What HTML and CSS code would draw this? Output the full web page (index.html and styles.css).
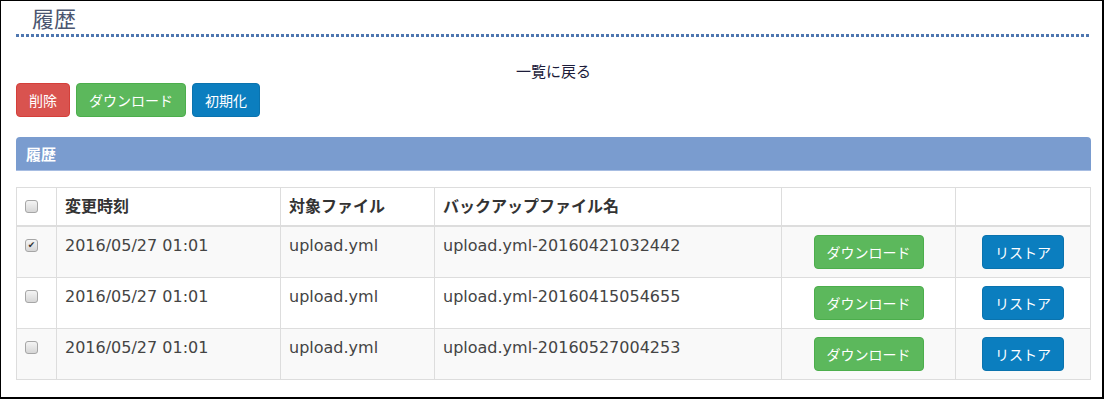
FILE: index.html
```html
<!DOCTYPE html>
<html lang="ja">
<head>
  <meta charset="UTF-8" />
  <title>履歴</title>
  <link rel="stylesheet" href="styles.css">
</head>
<body>
  <div class="pantalla">
    <h1>履歴</h1>

    <div class="volver">一覧に戻る</div>

    <div class="acciones">
      <button class="btn rojo">削除</button>
      <button class="btn verde">ダウンロード</button>
      <button class="btn azul">初期化</button>
    </div>

    <div class="panel-titulo">履歴</div>

    <table class="tabla">
      <thead>
        <tr>
          <th class="col-chk"><span class="chk"></span></th>
          <th class="col-fecha">変更時刻</th>
          <th class="col-obj">対象ファイル</th>
          <th class="col-bak">バックアップファイル名</th>
          <th class="col-btn1"></th>
          <th></th>
        </tr>
      </thead>
      <tbody>
        <tr>
          <td><span class="chk marcado">&#10004;</span></td>
          <td>2016/05/27 01:01</td>
          <td>upload.yml</td>
          <td>upload.yml-20160421032442</td>
          <td class="centro"><button class="btn verde">ダウンロード</button></td>
          <td class="centro"><button class="btn azul">リストア</button></td>
        </tr>
        <tr>
          <td><span class="chk"></span></td>
          <td>2016/05/27 01:01</td>
          <td>upload.yml</td>
          <td>upload.yml-20160415054655</td>
          <td class="centro"><button class="btn verde">ダウンロード</button></td>
          <td class="centro"><button class="btn azul">リストア</button></td>
        </tr>
        <tr>
          <td><span class="chk"></span></td>
          <td>2016/05/27 01:01</td>
          <td>upload.yml</td>
          <td>upload.yml-20160527004253</td>
          <td class="centro"><button class="btn verde">ダウンロード</button></td>
          <td class="centro"><button class="btn azul">リストア</button></td>
        </tr>
      </tbody>
    </table>
  </div>
</body>
</html>
```

FILE: styles.css
```css
* {
  box-sizing: border-box;
}
body {
  margin: 0;
  font-family: "DejaVu Sans", "Noto Sans CJK JP", sans-serif;
  color: #333;
  background: #fff;
}
.pantalla {
  width: 1104px;
  height: 399px;
  border: 1px solid #000;
  border-right-width: 2px;
  border-bottom-width: 2px;
  padding: 0 11px 0 15px;
  overflow: hidden;
}
h1 {
  margin: 0;
  padding: 0 0 4px 16px;
  font-size: 22px;
  line-height: 33px;
  font-weight: normal;
  color: #4b5670;
  font-family: "Noto Sans CJK JP", sans-serif;
  /* linea punteada de cuadritos */
  background-image: linear-gradient(to right, #4f77b0 60%, transparent 60%);
  background-size: 5px 3px;
  background-repeat: repeat-x;
  background-position: left bottom 1px;
}
.volver {
  margin-top: 23px;
  text-align: center;
  font-size: 15px;
  line-height: 20px;
  color: #1c1c3a;
  font-family: "Noto Sans CJK JP", sans-serif;
}
.acciones {
  margin-top: 2px;
  display: flex;
  gap: 6px;
}
.btn {
  font-family: "Noto Sans CJK JP", sans-serif;
  font-size: 14px;
  line-height: 20px;
  padding: 6px 12px;
  border: 1px solid transparent;
  border-radius: 4px;
  color: #fff;
  cursor: pointer;
}
.rojo {
  background: #d9534f;
  border-color: #d43f3a;
}
.verde {
  background: #5cb85c;
  border-color: #4cae4c;
}
.azul {
  background: #0b7ebf;
  border-color: #0a73ae;
}
.panel-titulo {
  margin-top: 20px;
  background: #7a9ccf;
  color: #fff;
  font-weight: bold;
  font-size: 15px;
  line-height: 17px;
  padding: 8px 10px;
  border-bottom: 1px solid #a7bde2;
  border-radius: 4px 4px 0 0;
  font-family: "Noto Sans CJK JP", sans-serif;
}
.tabla {
  margin-top: 16px;
  width: 100%;
  border-collapse: collapse;
  border: 1px solid #ddd;
  font-size: 16px;
}
.tabla th,
.tabla td {
  border: 1px solid #ddd;
  padding: 8px;
  line-height: 21px;
  text-align: left;
  vertical-align: top;
}
.tabla td {
  color: #444;
}
.tabla th {
  border-bottom: 2px solid #ddd;
  font-weight: bold;
  color: #333;
}
.tabla tbody tr:nth-child(odd) {
  background: #f9f9f9;
}
.tabla td.centro {
  text-align: center;
}
.col-chk { width: 40px; }
.col-fecha { width: 224px; }
.col-obj { width: 154px; }
.col-bak { width: 347px; }
.col-btn1 { width: 174px; }
.chk {
  display: inline-block;
  width: 13px;
  height: 13px;
  margin-top: 4px;
  vertical-align: top;
  border: 1px solid #a6a6a6;
  border-radius: 3px;
  background: linear-gradient(#f4f4f4, #d6d6d6);
  font-size: 9px;
  line-height: 11px;
  text-align: center;
  color: #333;
}
```
